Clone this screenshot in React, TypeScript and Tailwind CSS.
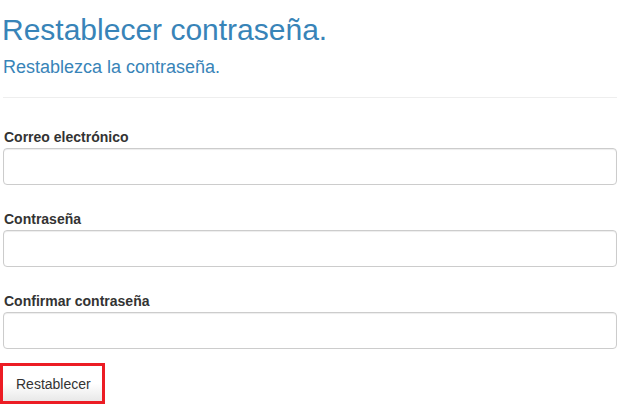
export default function App() {
  const fields = [
    { id: 'email', label: 'Correo electrónico', type: 'email' },
    { id: 'password', label: 'Contraseña', type: 'password' },
    { id: 'confirm', label: 'Confirmar contraseña', type: 'password' },
  ];

  return (
    <div className="min-h-screen bg-white pl-[3px] pr-[4px] font-['Liberation_Sans',Arial,sans-serif]">
      <h2 className="pt-[13px] -ml-[1px] text-[30px] leading-[33px] font-normal text-[#3884b8]">
        Restablecer contraseña.
      </h2>
      <h4 className="mt-[11px] text-[18px] leading-[20px] font-normal text-[#3884b8]">
        Restablezca la contraseña.
      </h4>
      <hr className="mt-[20px] border-0 border-t border-[#eeeeee]" />

      <form className="mt-[29px]" onSubmit={(e) => e.preventDefault()}>
        {fields.map((f, i) => (
          <div key={f.id} className={i === fields.length - 1 ? 'mb-[14px]' : 'mb-[24px]'}>
            <label htmlFor={f.id} className="block mb-[1px] pl-[1px] text-[14px] leading-[20px] font-bold text-[#333333]">
              {f.label}
            </label>
            <input
              id={f.id}
              type={f.type}
              className="block w-full h-[37px] px-3 text-[14px] text-[#555] bg-white border border-[#cccccc] rounded-[4px] shadow-[inset_0_1px_1px_rgba(0,0,0,0.075)] outline-none"
            />
          </div>
        ))}

        <button
          type="submit"
          className="-ml-[3px] h-[41px] pl-[13px] pr-[11px] border-[3px] border-[#ec1c24] bg-gradient-to-b from-white via-white to-[#e8e8e8] text-[14px] leading-[20px] text-[#333333]"
        >
          Restablecer
        </button>
      </form>
    </div>
  );
}
